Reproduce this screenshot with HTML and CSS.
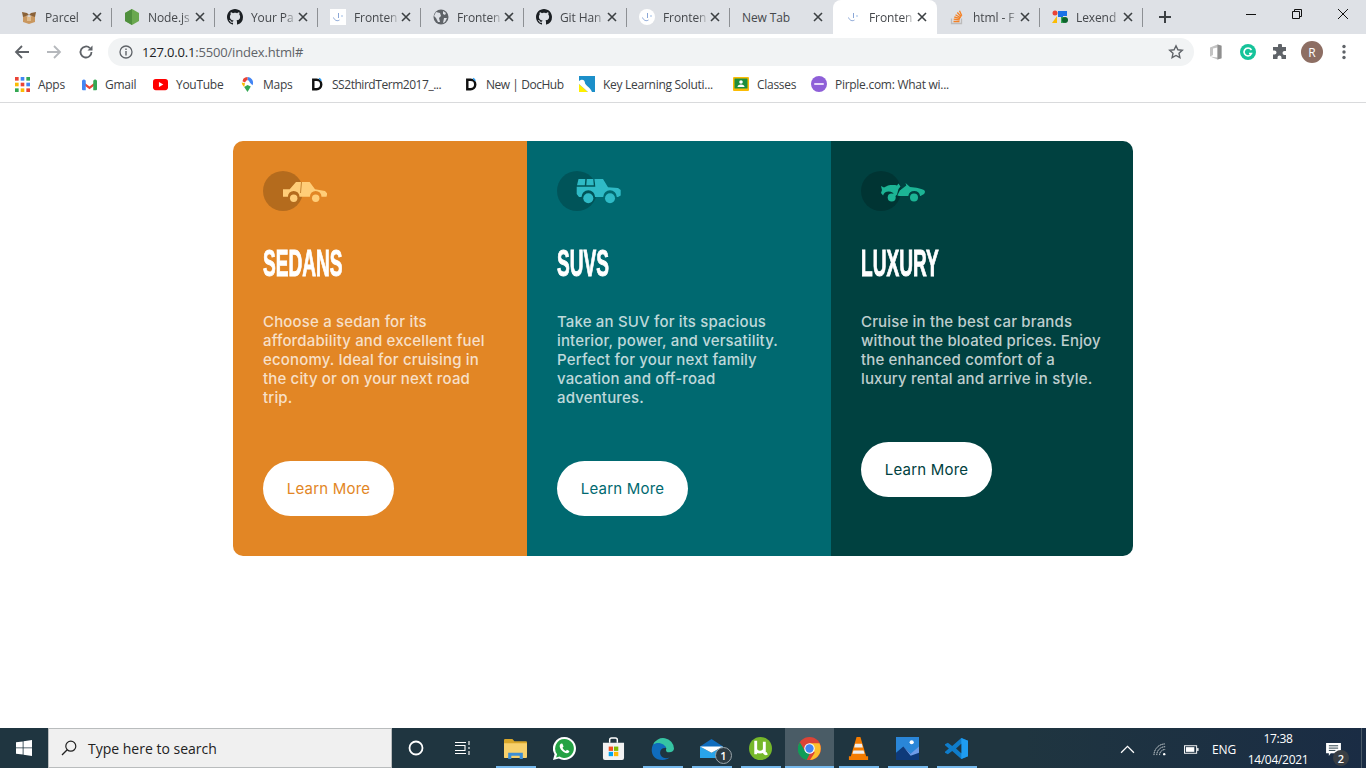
FILE: index.html
```html
<!DOCTYPE html>
<html lang="en">
<head>
<meta charset="utf-8">
<title>3-column preview card</title>
<link rel="stylesheet" href="styles.css">
</head>
<body>
<svg class="defs" width="0" height="0" aria-hidden="true">
  <symbol id="gh" viewBox="0 0 16 16"><path fill="#1b1f23" d="M8 0C3.58 0 0 3.58 0 8c0 3.54 2.29 6.53 5.47 7.59.4.07.55-.17.55-.38 0-.19-.01-.82-.01-1.49-2.01.37-2.53-.49-2.69-.94-.09-.23-.48-.94-.82-1.13-.28-.15-.68-.52-.01-.53.63-.01 1.08.58 1.23.82.72 1.21 1.87.87 2.33.66.07-.52.28-.87.51-1.07-1.78-.2-3.64-.89-3.64-3.95 0-.87.31-1.59.82-2.15-.08-.2-.36-1.02.08-2.12 0 0 .67-.21 2.2.82.64-.18 1.32-.27 2-.27.68 0 1.36.09 2 .27 1.53-1.04 2.2-.82 2.2-.82.44 1.1.16 1.92.08 2.12.51.56.82 1.27.82 2.15 0 3.07-1.87 3.75-3.65 3.95.29.25.54.73.54 1.48 0 1.07-.01 1.93-.01 2.2 0 .21.15.46.55.38A8.013 8.013 0 0016 8c0-4.42-3.58-8-8-8z"/></symbol>
  <symbol id="fm" viewBox="0 0 16 16"><path fill="none" stroke="#8aa6d6" stroke-width="1" d="M3.500 8.500c1 3 4 4 6 2.500M8.500 4v5"/><circle cx="12" cy="7" r="1" fill="#bcd2ee"/></symbol>
  <symbol id="x" viewBox="0 0 10 10"><path fill="none" stroke="#3c4043" stroke-width="1.600" d="M1 1l8 8M9 1l-8 8"/></symbol>
  <symbol id="dh" viewBox="0 0 12 16"><path fill="none" stroke="#111" stroke-width="2.600" d="M1.500 3h3.500a5 5 0 010 10H1.500z"/><path fill="none" stroke="#2a9df4" stroke-width="1.400" d="M7.500 1.500a4 4 0 012.500 2.500"/></symbol>
</svg>

<header class="chrome">
  <div class="tabbar">
    <div class="tab">
      <svg class="fav" viewBox="0 0 16 16"><path fill="#c9975f" d="M2 6l6 2 6-2v7l-6 2-6-2z"/><path fill="#8a6238" d="M1 3l5 1 2 2-6 2zM15 3l-5 1-2 2 6 2z"/><path fill="#e0bc8d" d="M6 8h4v4H6z"/></svg>
      <span class="tab-title">Parcel</span><svg class="tab-x"><use href="#x"/></svg>
    </div>
    <div class="tab">
      <svg class="fav" viewBox="0 0 16 16"><path fill="#6aa84f" d="M8 0l7 4v8l-7 4-7-4V4z"/><path fill="#4f8f3d" d="M8 0v16l-7-4V4z"/></svg>
      <span class="tab-title">Node.js</span><svg class="tab-x"><use href="#x"/></svg>
    </div>
    <div class="tab">
      <svg class="fav"><use href="#gh"/></svg>
      <span class="tab-title">Your Pa</span><svg class="tab-x"><use href="#x"/></svg>
    </div>
    <div class="tab">
      <svg class="fav fav-white"><use href="#fm"/></svg>
      <span class="tab-title">Fronten</span><svg class="tab-x"><use href="#x"/></svg>
    </div>
    <div class="tab">
      <svg class="fav" viewBox="0 0 16 16"><circle cx="8" cy="8" r="7.500" fill="#5f6368"/><path fill="#dee1e6" d="M3 3l4 1 1 3-2 2 1 4-2 0-2-4-2-2zM10 2l3 2-1 2-2-1zM11 9l3 0-2 4-2 1z"/></svg>
      <span class="tab-title">Fronten</span><svg class="tab-x"><use href="#x"/></svg>
    </div>
    <div class="tab">
      <svg class="fav"><use href="#gh"/></svg>
      <span class="tab-title">Git Han</span><svg class="tab-x"><use href="#x"/></svg>
    </div>
    <div class="tab">
      <svg class="fav fav-round"><use href="#fm"/></svg>
      <span class="tab-title">Fronten</span><svg class="tab-x"><use href="#x"/></svg>
    </div>
    <div class="tab tab-before-active">
      <span class="tab-title tab-title-full">New Tab</span><svg class="tab-x"><use href="#x"/></svg>
    </div>
    <div class="tab tab-active">
      <svg class="fav"><use href="#fm"/></svg>
      <span class="tab-title">Fronten</span><svg class="tab-x"><use href="#x"/></svg>
    </div>
    <div class="tab">
      <svg class="fav" viewBox="0 0 16 16"><path fill="none" stroke="#bcbbbb" stroke-width="1.300" d="M2.500 9.500v5h10v-5"/><path fill="none" stroke="#f48024" stroke-width="1.300" d="M4.500 12.500h6M4.700 10.200l6 .6M5.300 8l5.800 1.600M6.500 5.700l5.200 3M8.300 3.500l4 4.200M10.500 1.800l2.300 5"/></svg>
      <span class="tab-title">html - F</span><svg class="tab-x"><use href="#x"/></svg>
    </div>
    <div class="tab">
      <svg class="fav" viewBox="0 0 16 16"><circle cx="3" cy="4" r="2.500" fill="#ea4335"/><path fill="#fbbc04" d="M0 14l5-7v7z"/><path fill="#1a73e8" d="M6 2h5v6H6zM11 2h4v5h-4z"/><path fill="#34a853" d="M9 8h3v6H9z"/><circle cx="13" cy="11" r="3" fill="#0d652d"/></svg>
      <span class="tab-title">Lexend</span><svg class="tab-x"><use href="#x"/></svg>
    </div>
    <svg class="newtab" viewBox="0 0 14 14"><path fill="none" stroke="#3c4043" stroke-width="2" d="M7 1v12M1 7h12"/></svg>
    <div class="winctl">
      <span class="winbtn"><svg viewBox="0 0 12 12"><path stroke="#111" d="M1 6.500h10"/></svg></span>
      <span class="winbtn"><svg viewBox="0 0 12 12"><path fill="none" stroke="#111" d="M1.500 3.500h7v7h-7zM3.500 3.500v-2h7v7h-2"/></svg></span>
      <span class="winbtn"><svg viewBox="0 0 12 12"><path fill="none" stroke="#111" d="M1 1l10 10M11 1L1 11"/></svg></span>
    </div>
  </div>

  <div class="toolbar">
    <span class="tool"><svg viewBox="0 0 16 16"><path fill="none" stroke="#5f6368" stroke-width="1.800" d="M15 8H2M8 2L2 8l6 6"/></svg></span>
    <span class="tool"><svg viewBox="0 0 16 16"><path fill="none" stroke="#b5b8bc" stroke-width="1.800" d="M1 8h13M8 2l6 6-6 6"/></svg></span>
    <span class="tool"><svg viewBox="0 0 16 16"><path fill="none" stroke="#5f6368" stroke-width="1.800" d="M13.500 8a5.500 5.500 0 11-1.600-3.900"/><path fill="#5f6368" d="M14.500 1.500v5h-5z"/></svg></span>
    <div class="omnibox">
      <svg class="omni-info" viewBox="0 0 14 14"><circle cx="7" cy="7" r="6" fill="none" stroke="#5f6368" stroke-width="1.300"/><path fill="#5f6368" d="M6.300 6h1.400v4.500H6.300zM6.300 3.500h1.400v1.400H6.300z"/></svg>
      <span class="url"><span class="url-host">127.0.0.1</span>:5500/index.html#</span>
      <svg class="omni-star" viewBox="0 0 16 16"><path fill="none" stroke="#5f6368" stroke-width="1.400" d="M8 1.800l1.900 4 4.400.5-3.300 3 .9 4.400L8 11.500l-3.900 2.200.9-4.400-3.300-3 4.400-.5z"/></svg>
    </div>
    <span class="tool"><svg viewBox="0 0 16 16"><path fill="#c4c4c4" d="M2 3.500L9.500 .5l4 1.300v12.400l-4 1.300L2 12.500l7.500 1V3.600L5 4.600v6.300l-3 1.600z"/><path fill="#8f8f8f" d="M9.500 .5l4 1.300v12.400l-4 1.300z"/></svg></span>
    <span class="tool"><svg viewBox="0 0 16 16"><circle cx="8" cy="8" r="8" fill="#15c39a"/><path fill="none" stroke="#fff" stroke-width="1.600" d="M11.500 6A4 4 0 108 12a4 4 0 003.500-2.500H9"/></svg></span>
    <span class="tool"><svg viewBox="0 0 16 16"><path fill="#5f6368" d="M6 1.500a2 2 0 014 0V3h4v4h-1.500a2 2 0 000 4H14v4H9.500v-1.500a2 2 0 00-4 0V15H1v-4.500h1.500a2 2 0 000-4H1V3h5z"/></svg></span>
    <span class="tool"><span class="avatar">R</span></span>
    <span class="tool"><svg viewBox="0 0 16 16"><circle cx="8" cy="2.500" r="1.700" fill="#5f6368"/><circle cx="8" cy="8" r="1.700" fill="#5f6368"/><circle cx="8" cy="13.500" r="1.700" fill="#5f6368"/></svg></span>
  </div>

  <nav class="bookmarks">
    <a class="bm"><svg viewBox="0 0 14 14"><g><rect width="3.400" height="3.400" fill="#ea4335"/><rect x="5.300" width="3.400" height="3.400" fill="#4285f4"/><rect x="10.600" width="3.400" height="3.400" fill="#34a853"/><rect y="5.300" width="3.400" height="3.400" fill="#fbbc04"/><rect x="5.300" y="5.300" width="3.400" height="3.400" fill="#ea4335"/><rect x="10.600" y="5.300" width="3.400" height="3.400" fill="#4285f4"/><rect y="10.600" width="3.400" height="3.400" fill="#34a853"/><rect x="5.300" y="10.600" width="3.400" height="3.400" fill="#fbbc04"/><rect x="10.600" y="10.600" width="3.400" height="3.400" fill="#ea4335"/></g></svg>Apps</a>
    <a class="bm"><svg viewBox="0 0 16 12"><path fill="#ea4335" d="M0 2l8 6 8-6v3l-8 6-8-6z"/><path fill="#4285f4" d="M0 2.500a2 2 0 013-1.500L4 2v10H1a1 1 0 01-1-1z"/><path fill="#34a853" d="M16 2.500A2 2 0 0013 1l-1 1v10h3a1 1 0 001-1z"/></svg>Gmail</a>
    <a class="bm"><svg viewBox="0 0 16 12"><rect width="16" height="12" rx="3" fill="#f00"/><path fill="#fff" d="M6.300 3.300L11 6l-4.700 2.700z"/></svg>YouTube</a>
    <a class="bm"><svg viewBox="0 0 14 18"><path fill="#34a853" d="M3 12l4 6 4-6.500-4-2z"/><path fill="#fbbc04" d="M1 9.500a6.500 6.500 0 01-.9-3l4 1L3 12z"/><path fill="#4285f4" d="M7 0a7 7 0 016 10l-4-4-2-1z"/><path fill="#ea4335" d="M2 2a7 7 0 015-2v4L4 6.500 1 5z"/><circle cx="7" cy="6.500" r="2.500" fill="#fff"/></svg>Maps</a>
    <a class="bm bm-tight"><svg><use href="#dh"/></svg>SS2thirdTerm2017_...</a>
    <a class="bm bm-tight"><svg><use href="#dh"/></svg>New | DocHub</a>
    <a class="bm bm-wide"><svg viewBox="0 0 16 16"><rect width="16" height="16" fill="#1c8fc9"/><path fill="#ffef00" d="M0 8l9 8H0z"/><path fill="#fff" d="M0 5c4-3 6 0 6 2s5 4 7 9h-4L0 8z"/></svg>Key Learning Soluti...</a>
    <a class="bm bm-wide"><svg viewBox="0 0 16 14"><rect width="16" height="14" rx="1" fill="#fbbc04"/><rect x="1.500" y="1.500" width="13" height="10" fill="#1e8e3e"/><circle cx="8" cy="5" r="1.800" fill="#fff"/><path fill="#fff" d="M4.500 10a3.500 2.500 0 017 0z"/></svg>Classes</a>
    <a class="bm bm-wide"><svg viewBox="0 0 16 16"><circle cx="8" cy="8" r="8" fill="#8e5fd8"/><rect x="3" y="7" width="10" height="2" rx="1" fill="#e6d9fa"/></svg>Pirple.com: What wi...</a>
  </nav>
</header>

<main class="page">
  <section class="cards">
    <article class="card card-sedan">
      <svg class="car" viewBox="0 0 64 40"><circle class="halo" cx="20" cy="20" r="20"/><path class="car-body" d="M26.700 18.300L33 11H46.700L52 18.300L62 20L64.300 22.500L63.500 25.700H58.500a5.800 5.800 0 00-11.600 0H36.500a5.800 5.800 0 00-11.600 0H20V18.300Z"/><path class="car-cut" d="M38.500 11L37.500 22"/><circle class="car-body" cx="30.700" cy="27.300" r="3.700"/><circle class="car-body" cx="52.700" cy="27.300" r="3.700"/></svg>
      <h2>Sedans</h2>
      <p>Choose a sedan for its affordability and excellent fuel economy. Ideal for cruising in the city or on your next road trip.</p>
      <a class="btn" href="#">Learn More</a>
    </article>
    <article class="card card-suv">
      <svg class="car" viewBox="0 0 64 40"><circle class="halo" cx="20" cy="20" r="20"/><path class="car-body" d="M21.500 8H28.300L27.800 14.300H20ZM29.800 8H36.200L36.800 14.300H29.300ZM37.500 8H46L51 16.300L61 17L63.700 19V24.500L61 26H59.800a6.800 6.800 0 00-13.600 0H38.100a6.800 6.800 0 00-13.600 0H22L19.700 23V15.800H38.300Z"/><circle class="car-body" cx="31.300" cy="27.300" r="5"/><circle class="car-body" cx="53" cy="27.300" r="5"/></svg>
      <h2>SUVs</h2>
      <p>Take an SUV for its spacious interior, power, and versatility. Perfect for your next family vacation and off-road adventures.</p>
      <a class="btn" href="#">Learn More</a>
    </article>
    <article class="card card-luxury">
      <svg class="car" viewBox="0 0 64 40"><circle class="halo" cx="20" cy="20" r="20"/><path class="car-body" d="M20 15l3 1.500 4-2c3-.6 7-.5 9 0l1.500-2 2 3-2 2.500-1.500 5.500-1.500 1.500h-1a6 6 0 00-11.600 0H22.500L20 22l1-3zM44.500 12l4.500 4c6 .5 12 1.500 14.500 3.500.8 1 .5 2.500-.5 3.500l-3.500 2h-.4a6 6 0 00-11.800 0h-9l-2-.5 2.500-5 6.500-5z"/><circle class="car-body" cx="30.700" cy="26.500" r="4"/><circle class="car-body" cx="53" cy="26.500" r="4"/></svg>
      <h2>Luxury</h2>
      <p>Cruise in the best car brands without the bloated prices. Enjoy the enhanced comfort of a luxury rental and arrive in style.</p>
      <a class="btn" href="#">Learn More</a>
    </article>
  </section>
</main>

<footer class="taskbar">
  <span class="start"><svg viewBox="0 0 16 16"><path fill="#fff" d="M0 2.300L6.700 1.400V7.500H0zM7.500 1.300L16 0v7.500H7.500zM0 8.300h6.700v6.300L0 13.700zM7.500 8.300H16V16l-8.500-1.200z"/></svg></span>
  <div class="search">
    <svg viewBox="0 0 16 16"><circle cx="9.800" cy="6.200" r="5" fill="none" stroke="#222" stroke-width="1.200"/><path stroke="#222" stroke-width="1.300" d="M6.200 9.800L1 15"/></svg>
    <span>Type here to search</span>
  </div>
  <span class="slot slot-cortana"><svg viewBox="0 0 16 16"><circle cx="8" cy="8" r="6.500" fill="none" stroke="#fff" stroke-width="1.800"/></svg></span>
  <span class="slot slot-task"><svg viewBox="0 0 16 16"><path fill="none" stroke="#fff" stroke-width="1.100" d="M0 2.500h11M0 13.500h11M0 5.500h10v5H0M14 1v4M14 7v2M14 11v4"/></svg></span>
  <span class="slot app run"><svg viewBox="0 0 22 20"><path fill="#d9a72a" d="M0 2a1 1 0 011-1h7l2 2h11a1 1 0 011 1v14a1 1 0 01-1 1H0z"/><path fill="#f8d16c" d="M0 5h22v13a1 1 0 01-1 1H1a1 1 0 01-1-1z"/><path fill="#3c8ed6" d="M4 14h14v6h-3v-3H7v3H4z"/></svg></span>
  <span class="slot app"><svg viewBox="0 0 22 22"><path fill="#fff" d="M11 0a11 11 0 11-5.400 20.600L0 22l1.500-5.400A11 11 0 0111 0z"/><path fill="#25a244" d="M11 2a9 9 0 11-4.700 16.700l-3.300.9.900-3.200A9 9 0 0111 2z"/><path fill="#fff" d="M8 6.300c-.6 0-1.600 1-1.600 2.500 0 2.700 4 6.700 6.900 6.700 1.500 0 2.500-1.200 2.300-2.200l-2.300-1.100-1 1.100c-1.300-.4-2.700-1.800-3.200-3.100l1-1-1-2.800z"/></svg></span>
  <span class="slot app"><svg viewBox="0 0 24 24"><path fill="none" stroke="#fff" stroke-width="1.500" d="M8 6V3a2 2 0 012-2h4a2 2 0 012 2v3"/><path fill="#f2f2f2" d="M1 6h22v16a2 2 0 01-2 2H3a2 2 0 01-2-2z"/><rect x="7" y="10" width="4.500" height="4.500" fill="#f25022"/><rect x="12.500" y="10" width="4.500" height="4.500" fill="#7fba00"/><rect x="7" y="15.500" width="4.500" height="4.500" fill="#00a4ef"/><rect x="12.500" y="15.500" width="4.500" height="4.500" fill="#ffb900"/></svg></span>
  <span class="slot app run"><svg viewBox="0 0 24 24"><path fill="#36c4a3" d="M2 8a11.500 11.500 0 0122 4c0 2.500-2 4-5 4-4 0-3.500-3-3-4-1-4-9-6-14-4z"/><path fill="#0f6cbd" d="M2 8C-1 14 1 24 12 24c3 0 5.500-1 7.500-2.500-6 2-10-1-10-5 0-3 2-5 5-5 1 0 1.500.2 1.500.5C15 7 7 4 2 8z"/></svg></span>
  <span class="slot app run"><svg viewBox="0 0 22 18"><path fill="#0f6cbd" d="M0 7l11-7 11 7v2H0z"/><path fill="#29a4ea" d="M0 7l11 6 11-6v11H0z"/><path fill="#fff" d="M0 7h22l-11 6z"/></svg><b class="badge">1</b></span>
  <span class="slot app run"><svg viewBox="0 0 24 24"><circle cx="12" cy="12" r="12" fill="#76b82a"/><path fill="none" stroke="#fff" stroke-width="3" d="M7 4v14M7 12c0 5 9 5 9 0M16 16c0 1 1 2 3 1M16 5v11"/></svg></span>
  <span class="slot app run slot-active"><svg viewBox="0 0 22 22"><circle cx="11" cy="11" r="11" fill="#db4437"/><path fill="#fbc02d" d="M11 6h9.500a11 11 0 01-9 16l4.500-7z"/><path fill="#0f9d58" d="M1.700 5l5 8.500 4.500 2.500-3 6A11 11 0 011.700 5z"/><circle cx="11" cy="11" r="5" fill="#fff"/><circle cx="11" cy="11" r="4" fill="#4285f4"/></svg></span>
  <span class="slot app run"><svg viewBox="0 0 20 24"><path fill="#f57c00" d="M8 0h4l6 20h2v4H0v-4h2z"/><path fill="#eee" d="M6.500 7h7l1 4h-9zM4.700 14h10.600l1 3.500H3.700z"/></svg></span>
  <span class="slot app run"><svg viewBox="0 0 22 22"><rect width="22" height="22" fill="#2a86d8"/><path fill="#0e3a7a" d="M0 22V15l7-6 7 7 8-4v10z"/><path fill="#6e9ce8" d="M7 9l7 7 8-7v6l-8 3z"/><circle cx="15" cy="5" r="2" fill="#fff"/></svg></span>
  <span class="slot app run"><svg viewBox="0 0 24 24"><path fill="#0f7dcb" d="M17 1l7 3v16l-7 3-9.500-8.500L3 18l-3-1.500v-1L4 12 0 8.500v-1L3 6l4.500 3.500z"/><path fill="#1f9cf0" d="M17 1l7 3v16l-7 3z"/><path fill="#1f3540" d="M17 7l-5.500 5 5.500 5z"/></svg></span>
  <div class="tray">
    <span class="tray-item"><svg viewBox="0 0 14 8"><path fill="none" stroke="#fff" stroke-width="1.200" d="M1 7l6-6 6 6"/></svg></span>
    <span class="tray-item"><svg viewBox="0 0 16 14"><path fill="none" stroke="#e6eaec" stroke-dasharray="1.500 .6" d="M1 13A12 12 0 0113 1M4 13a9 9 0 019-9M7 13a6 6 0 016-6"/><circle cx="12" cy="12" r="1.300" fill="#fff"/></svg></span>
    <span class="tray-item"><svg viewBox="0 0 16 9"><rect x=".5" y=".5" width="13" height="8" fill="none" stroke="#fff"/><rect x="2" y="2" width="9" height="5" fill="#fff"/><rect x="14" y="3" width="1.500" height="3" fill="#fff"/></svg></span>
    <span class="tray-item tray-text">ENG</span>
    <span class="clock"><span>17:38</span><span>14/04/2021</span></span>
    <span class="tray-item"><svg viewBox="0 0 16 14"><path fill="#fff" d="M0 0h16v11H5l-2 3v-3H0z"/><path stroke="#1f3540" d="M3 3h10M3 5.500h10M3 8h7"/></svg><b class="badge badge-dark">2</b></span>
  </div>
</footer>
</body>
</html>
```

FILE: styles.css
```css
* { box-sizing: border-box; }
html, body { margin: 0; height: 100%; }
body {
  display: flex;
  flex-direction: column;
  height: 768px;
  overflow: hidden;
  background: #fff;
  font-family: "Open Sans", "Liberation Sans", sans-serif;
}
.defs { position: absolute; }

/* Browser chrome */
.chrome { flex: none; }
.tabbar {
  display: flex;
  align-items: flex-start;
  height: 34px;
  padding-left: 9px;
  background: #dee1e6;
}
.tab {
  position: relative;
  display: flex;
  align-items: center;
  flex: none;
  width: 103px;
  height: 34px;
  padding: 0 10px 0 12px;
  font-size: 12px;
  letter-spacing: -0.1px;
  color: #45484c;
}
.tab::after {
  content: "";
  position: absolute;
  right: 0;
  top: 8px;
  width: 1px;
  height: 19px;
  background: #8d9094;
}
.tab-before-active::after { display: none; }
.tab-active {
  width: 104px;
  border-radius: 8px 8px 0 0;
  background: #fff;
}
.tab-active::after { display: none; }
.fav { flex: none; width: 16px; height: 16px; margin-right: 8px; }
.fav-white { background: #fff; }
.fav-round { background: #fff; border-radius: 50%; }
.tab-title {
  flex: 1;
  min-width: 0;
  white-space: nowrap;
  -webkit-mask-image: linear-gradient(90deg, #000 72%, transparent 98%);
  mask-image: linear-gradient(90deg, #000 72%, transparent 98%);
}
.tab-title-full { -webkit-mask-image: none; mask-image: none; }
.tab-x { flex: none; width: 10px; height: 10px; }
.newtab { flex: none; width: 14px; height: 14px; margin: 10px 0 0 15px; }
.winctl { display: flex; margin-left: auto; }
.winbtn {
  display: flex;
  align-items: center;
  justify-content: center;
  width: 46px;
  height: 28px;
}
.winbtn svg { width: 12px; height: 12px; }

.toolbar {
  display: flex;
  align-items: center;
  height: 34px;
  padding: 2px 6px 0;
  background: #fff;
}
.tool {
  display: flex;
  align-items: center;
  justify-content: center;
  flex: none;
  width: 32px;
  height: 32px;
}
.tool svg { width: 16px; height: 16px; }
.omnibox {
  display: flex;
  align-items: center;
  flex: 1;
  height: 28px;
  margin: 0 6px;
  padding: 0 10px 0 11px;
  border-radius: 14px;
  background: #f1f3f4;
}
.omni-info { flex: none; width: 14px; height: 14px; margin-right: 9px; }
.url { flex: 1; font-size: 13px; letter-spacing: -0.18px; color: #5f6368; }
.url-host { color: #202124; }
.omni-star { flex: none; width: 16px; height: 16px; }
.avatar {
  display: flex;
  align-items: center;
  justify-content: center;
  width: 22px;
  height: 22px;
  border-radius: 50%;
  background: #8d6e63;
  color: #fff;
  font-size: 12px;
}

.bookmarks {
  display: grid;
  grid-template-columns: 67px 71px 87px 70px 154px 115px 154px 78px auto;
  align-items: center;
  height: 35px;
  padding: 0 0 2px 7px;
  border-bottom: 1px solid #d9dadc;
  background: #fff;
  font-size: 12px;
  letter-spacing: -0.28px;
  color: #3c4043;
}
.bm {
  display: flex;
  align-items: center;
  gap: 8px;
  padding: 0 8px;
  white-space: nowrap;
}
.bm svg { flex: none; width: 15px; height: 15px; }
.bm-tight { gap: 7px; letter-spacing: -0.46px; }
.bm-wide svg { width: 16px; height: 16px; }

/* Page */
.page {
  flex: 1;
  min-height: 0;
  padding-top: 38px;
}
.cards {
  display: grid;
  grid-template-columns: 294px 304px 302px;
  width: 900px;
  margin: 0 auto;
  border-radius: 10px;
  overflow: hidden;
}
.card {
  display: flex;
  flex-direction: column;
  align-items: flex-start;
  padding: 30px 30px 40px;
  color: rgba(255, 255, 255, 0.75);
}
.card-sedan { background: #e28625; }
.card-suv { background: #006970; }
.card-luxury { background: #004140; }
.car { display: block; width: 64px; height: 40px; }
.halo { fill: rgba(0, 0, 0, 0.2); }
.card-sedan .car-body { fill: #ffcd78; }
.card-sedan .car-cut { stroke: #b8711f; stroke-width: 0.8; fill: none; }
.card-suv .car-body { fill: #2fbac6; }
.card-luxury .car-body { fill: #1cb495; }
.card h2 {
  margin: 33px 0 0;
  width: 100%;
  font-family: "Liberation Sans", sans-serif;
  font-size: 36px;
  line-height: 40px;
  font-weight: 700;
  text-transform: uppercase;
  color: #fff;
  white-space: nowrap;
  -webkit-text-stroke: 1px #fff;
  transform: scaleX(0.53);
  transform-origin: left center;
}
.card p {
  margin: 28px 0 0;
  font-family: Inter, "Liberation Sans", sans-serif;
  font-size: 15px;
  font-weight: 500;
  line-height: 19px;
  letter-spacing: 0.16px;
}
.btn {
  display: flex;
  align-items: center;
  justify-content: center;
  width: 131px;
  height: 55px;
  margin-top: 54px;
  border-radius: 28px;
  background: #fff;
  font-family: Inter, "Liberation Sans", sans-serif;
  font-size: 15px;
  letter-spacing: 0.2px;
  text-decoration: none;
}
.card-sedan .btn { color: #e28625; }
.card-suv .btn { color: #006970; }
.card-luxury .btn { color: #004140; }

/* Taskbar */
.taskbar {
  flex: none;
  display: flex;
  align-items: stretch;
  height: 40px;
  background: linear-gradient(90deg, #1f3540 0%, #1f3540 75%, #1a2c44 100%);
  color: #fff;
}
.start {
  display: flex;
  align-items: center;
  justify-content: center;
  flex: none;
  width: 48px;
}
.start svg { width: 16px; height: 16px; }
.search {
  display: flex;
  align-items: center;
  gap: 11px;
  flex: none;
  width: 344px;
  padding-left: 12px;
  background: #f0f0f0;
  border: 1px solid #b9bcbd;
  color: #222;
  font-size: 14px;
}
.search svg { width: 16px; height: 16px; }
.slot {
  position: relative;
  display: flex;
  align-items: center;
  justify-content: center;
  flex: none;
  width: 49px;
}
.slot svg { width: 16px; height: 16px; }
.slot-cortana { width: 48px; }
.slot-task { width: 46px; margin-right: 5px; }
.app svg { width: 23px; height: 23px; }
.run::after {
  content: "";
  position: absolute;
  left: 5px;
  right: 4px;
  bottom: 0;
  height: 2px;
  background: #76b9ed;
}
.slot-active { background: #4a5c66; }
.slot-active::after { left: 0; right: 0; }
.badge {
  position: absolute;
  right: 4px;
  bottom: 4px;
  display: flex;
  align-items: center;
  justify-content: center;
  width: 17px;
  height: 17px;
  border: 1px solid #9aa5ab;
  border-radius: 50%;
  background: #2d3b43;
  color: #fff;
  font-size: 11px;
  font-weight: 600;
}
.tray {
  display: grid;
  grid-template-columns: 34px 32px 30px 36px 72px 38px;
  margin-left: auto;
  padding-right: 9px;
  margin-right: 4px;
  border-right: 1px solid #4a5a68;
  font-size: 12px;
}
.tray-item {
  position: relative;
  display: flex;
  align-items: center;
  justify-content: center;
}
.tray-item svg { width: 15px; height: 13px; }
.tray-text { letter-spacing: -0.2px; }
.clock {
  display: flex;
  flex-direction: column;
  align-items: center;
  justify-content: center;
  font-size: 12px;
  line-height: 21px;
  letter-spacing: -0.3px;
}
.badge-dark {
  right: 3px;
  width: 16px;
  height: 16px;
  border: 0;
  background: #3a3f44;
}
```
